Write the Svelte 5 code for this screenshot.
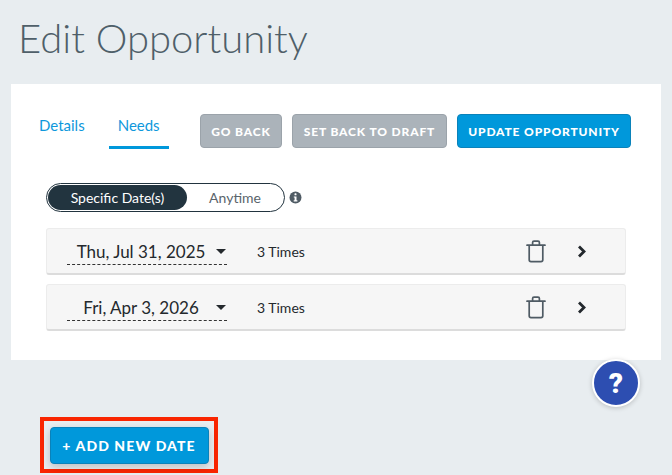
<script>
    const dates = [
        { label: "Thu, Jul 31, 2025", times: "3 Times" },
        { label: "Fri, Apr 3, 2026", times: "3 Times" }
    ];
</script>

<div class="page">
    <h1>Edit Opportunity</h1>

    <section class="card">
        <div class="top">
            <nav class="tabs">
                <a href="#details" class="tab details">Details</a>
                <a href="#needs" class="tab needs">Needs</a>
            </nav>
            <div class="actions">
                <button class="btn grey back">GO BACK</button>
                <button class="btn grey draft">SET BACK TO DRAFT</button>
                <button class="btn blue update">UPDATE OPPORTUNITY</button>
            </div>
        </div>

        <div class="toggle-row">
            <div class="toggle">
                <span class="opt on">Specific Date(s)</span>
                <span class="opt">Anytime</span>
            </div>
            <svg class="info" width="13" height="13" viewBox="0 0 13 13">
                <circle cx="6.5" cy="6.5" r="6" fill="#4f5b64" />
                <rect x="5.5" y="2.3" width="2" height="2" rx="0.6" fill="#fff" />
                <path d="M4.8 5.4h2.7v3.9h.9v1.1H4.7V9.3h.9V6.5h-.8z" fill="#fff" />
            </svg>
        </div>

        <div class="rows">
            {#each dates as d}
                <div class="row">
                    <div class="date">
                        <span class="date-text">{d.label}</span>
                        <span class="caret"></span>
                    </div>
                    <span class="times">{d.times}</span>
                    <svg class="trash" width="20" height="23" viewBox="0 0 20 23" fill="none" stroke="#4f5b64" stroke-width="1.7">
                        <path d="M1 5.2h18" stroke-linecap="round" />
                        <path d="M6.6 5V2.6c0-.8.6-1.4 1.4-1.4h4c.8 0 1.4.6 1.4 1.4V5" />
                        <path d="M3.2 5.2v14.6c0 1 .8 1.8 1.8 1.8h10c1 0 1.8-.8 1.8-1.8V5.2" />
                    </svg>
                    <svg class="chev" width="10" height="13" viewBox="0 0 10 13" fill="none" stroke="#23282d" stroke-width="2.8">
                        <path d="M2 1.5l5 5-5 5" />
                    </svg>
                </div>
            {/each}
        </div>
    </section>

    <button class="help" aria-label="Help">?</button>

    <div class="add-wrap">
        <button class="btn blue add">+ ADD NEW DATE</button>
    </div>
</div>

<style>
    :global(body) {
        margin: 0;
        background: #e8edf0;
    }

    .page {
        position: relative;
        width: 672px;
        height: 475px;
        overflow: hidden;
        font-family: Lato, "Open Sans", sans-serif;
        box-sizing: border-box;
        padding-top: 14px;
    }

    h1 {
        margin: 0 0 0 18px;
        font-size: 40px;
        line-height: 48px;
        font-weight: 300;
        color: #4f5f69;
        height: 70px;
    }

    .card {
        margin: 0 11px;
        width: 650px;
        height: 276px;
        background: #fff;
        box-sizing: border-box;
        padding: 30px 30px 0 28px;
    }

    .top {
        display: flex;
        height: 35px;
    }

    .tabs {
        display: flex;
        width: 161px;
    }

    .tab {
        color: #0e98dc;
        font-size: 15px;
        text-decoration: none;
        line-height: 22px;
    }

    .details {
        margin-right: 24px;
    }

    .needs {
        width: 60px;
        height: 35px;
        text-align: center;
        box-sizing: border-box;
        border-bottom: 3px solid #0098db;
    }

    .actions {
        display: flex;
        gap: 10px;
    }

    .btn {
        height: 34px;
        padding: 0;
        border-radius: 4px;
        font-family: inherit;
        font-size: 12px;
        font-weight: 900;
        letter-spacing: 0.85px;
        color: #fff;
        box-sizing: border-box;
    }

    .grey {
        background: #abb3ba;
        border: 1px solid #9ba3aa;
    }

    .blue {
        background: #0098db;
        border: 1px solid #0a82ba;
    }

    .back {
        width: 82px;
    }

    .draft {
        width: 155px;
    }

    .update {
        width: 174px;
    }

    .toggle-row {
        display: flex;
        align-items: center;
        margin: 34px 0 0 7px;
        gap: 4px;
    }

    .toggle {
        display: flex;
        width: 239px;
        height: 29px;
        box-sizing: border-box;
        border: 1px solid #22343f;
        border-radius: 15px;
        padding: 1px;
        background: #fff;
    }

    .opt {
        font-size: 14px;
        line-height: 25px;
        color: #5a646b;
        text-align: center;
        flex: 1;
    }

    .opt.on {
        flex: 0 0 139px;
        background: #22343f;
        color: #fff;
        border-radius: 13px;
    }

    .rows {
        display: flex;
        flex-direction: column;
        gap: 9px;
        margin: 16px 0 0 7px;
    }

    .row {
        display: flex;
        align-items: center;
        width: 580px;
        height: 47px;
        box-sizing: border-box;
        background: #f6f6f6;
        border: 1px solid #ececec;
        border-bottom: 2px solid #dcdcdc;
        border-radius: 3px;
        padding-left: 20px;
        color: #24292d;
    }

    .date {
        display: flex;
        align-items: center;
        justify-content: flex-end;
        width: 160px;
        height: 28px;
        padding-top: 2px;
        box-sizing: border-box;
        border-bottom: 1px dashed #333;
        font-size: 17px;
    }

    .date-text {
        flex: 1;
        text-align: center;
        padding-left: 8px;
        white-space: nowrap;
    }

    .caret {
        width: 0;
        height: 0;
        margin: 0 1px 0 9px;
        border-left: 5px solid transparent;
        border-right: 5px solid transparent;
        border-top: 5px solid #24292d;
    }

    .times {
        margin-left: 30px;
        font-size: 14px;
        width: 269px;
    }

    .chev {
        margin-left: 31px;
    }

    .help {
        position: absolute;
        left: 592px;
        top: 359px;
        width: 48px;
        height: 48px;
        border-radius: 50%;
        border: 2px solid #fff;
        background: #2d4eb1;
        color: #fff;
        font-family: Roboto, sans-serif;
        font-size: 28px;
        font-weight: 900;
        padding: 0;
        box-shadow: 0 1px 5px rgba(0, 0, 0, 0.2);
    }

    .add-wrap {
        display: flex;
        align-items: center;
        justify-content: center;
        width: 178px;
        height: 56px;
        box-sizing: border-box;
        margin: 57px 0 0 40px;
        border: 4px solid #f92500;
    }

    .add {
        width: 159px;
        height: 37px;
        font-size: 14px;
        letter-spacing: 1.1px;
        box-shadow: 0 3px 8px rgba(0, 0, 0, 0.2);
    }
</style>
